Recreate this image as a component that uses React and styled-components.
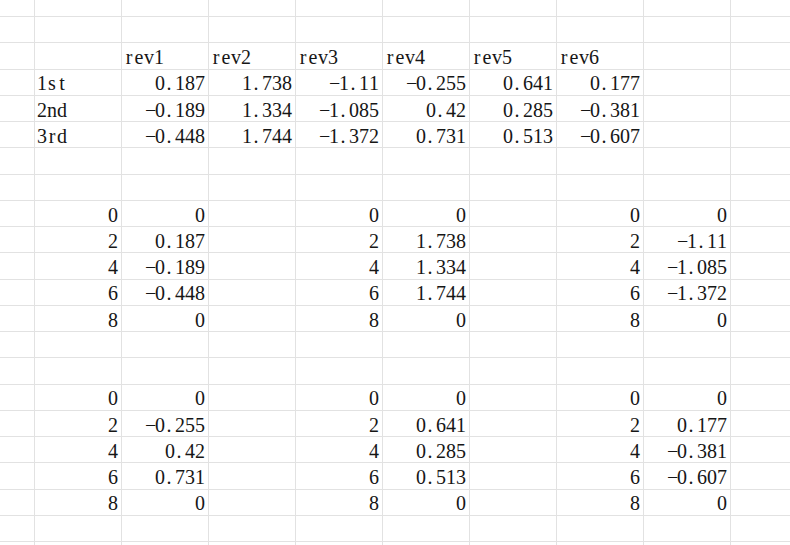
import React from 'react';
import styled, { createGlobalStyle } from 'styled-components';

const Global = createGlobalStyle`
  html, body { margin: 0; padding: 0; background: #fff; }
  body { font-family: "Liberation Serif", "Noto Sans CJK SC", serif; }
`;

const Sheet = styled.div`
  width: 790px;
  height: 545px;
  overflow: hidden;
  display: grid;
  grid-template-columns: 35px repeat(9, 87px);
  grid-template-rows: 17px repeat(21, 26.25px);
  background: #fff;
`;

const Cell = styled.div`
  box-sizing: border-box;
  border-right: 1px solid #e2e2e2;
  border-bottom: 1px solid #e2e2e2;
  display: flex;
  align-items: flex-end;
  justify-content: ${(p) => (p.$right ? 'flex-end' : 'flex-start')};
  padding: 0 ${(p) => (p.$right ? '3px' : '0')} 1.5px ${(p) => (p.$right ? '0' : '2px')};
  font-size: 20px;
  line-height: 20px;
  color: #161616;
  white-space: nowrap;
  overflow: hidden;
`;

const Text = styled.span`
  display: inline-flex;
  line-height: 20px;
`;

const Ch = styled.span`
  display: inline-block;
  box-sizing: border-box;
  width: 10px;
  text-align: ${(p) => (p.$dot ? 'left' : 'center')};
  padding-left: ${(p) => (p.$dot ? '1.5px' : '0')};
`;

const Mono = ({ value }) => (
  <Text>
    {value.split('').map((c, i) => (
      <Ch key={i} $dot={c === '.'}>
        {c === '-' ? '\u2212' : c}
      </Ch>
    ))}
  </Text>
);

const E = null;
const blank = () => Array(10).fill(E);
const row = (cells) => {
  const r = blank();
  Object.entries(cells).forEach(([k, v]) => {
    r[Number(k)] = v;
  });
  return r;
};
const block = (a, b, c) => row({ 1: a[0], 2: a[1], 4: b[0], 5: b[1], 7: c[0], 8: c[1] });

const rows = [
  blank(),
  blank(),
  row({ 2: 'rev1', 3: 'rev2', 4: 'rev3', 5: 'rev4', 6: 'rev5', 7: 'rev6' }),
  row({ 1: '1st', 2: '0.187', 3: '1.738', 4: '-1.11', 5: '-0.255', 6: '0.641', 7: '0.177' }),
  row({ 1: '2nd', 2: '-0.189', 3: '1.334', 4: '-1.085', 5: '0.42', 6: '0.285', 7: '-0.381' }),
  row({ 1: '3rd', 2: '-0.448', 3: '1.744', 4: '-1.372', 5: '0.731', 6: '0.513', 7: '-0.607' }),
  blank(),
  blank(),
  block(['0', '0'], ['0', '0'], ['0', '0']),
  block(['2', '0.187'], ['2', '1.738'], ['2', '-1.11']),
  block(['4', '-0.189'], ['4', '1.334'], ['4', '-1.085']),
  block(['6', '-0.448'], ['6', '1.744'], ['6', '-1.372']),
  block(['8', '0'], ['8', '0'], ['8', '0']),
  blank(),
  blank(),
  block(['0', '0'], ['0', '0'], ['0', '0']),
  block(['2', '-0.255'], ['2', '0.641'], ['2', '0.177']),
  block(['4', '0.42'], ['4', '0.285'], ['4', '-0.381']),
  block(['6', '0.731'], ['6', '0.513'], ['6', '-0.607']),
  block(['8', '0'], ['8', '0'], ['8', '0']),
  blank(),
  blank(),
];

const isNum = (v) => /^-?\d+(\.\d+)?$/.test(v);

export default function App() {
  return (
    <>
      <Global />
      <Sheet>
        {rows.map((r, ri) =>
          r.map((v, ci) => (
            <Cell key={`${ri}-${ci}`} $right={v != null && isNum(v)}>
              {v != null && <Mono value={v} />}
            </Cell>
          ))
        )}
      </Sheet>
    </>
  );
}
